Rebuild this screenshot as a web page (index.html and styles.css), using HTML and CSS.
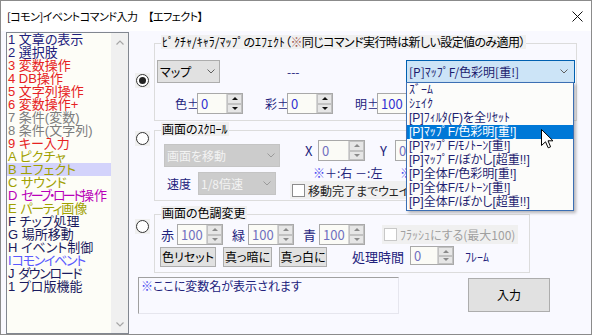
FILE: index.html
```html
<!DOCTYPE html>
<html lang="ja">
<head>
  <meta charset="UTF-8">
  <title>[コモン]イベントコマンド入力 【エフェクト】</title>
  <link rel="stylesheet" href="styles.css">
</head>
<body>
  <div class="window">
    <div class="titlebar">
      <span class="title">[コモン]イベントコマンド入力　【エフェクト】</span>
      <svg class="close" viewBox="0 0 11 11"><path d="M0.5 0.5 L10.5 10.5 M10.5 0.5 L0.5 10.5"/></svg>
    </div>

    <div class="client">
      <div class="cmd-list">
        <ul class="cmd-items">
          <li class="c-navy">1 文章の表示</li>
          <li class="c-navy">2 選択肢</li>
          <li class="c-red">3 変数操作</li>
          <li class="c-red">4 DB操作</li>
          <li class="c-red">5 文字列操作</li>
          <li class="c-red">6 変数操作+</li>
          <li class="c-gray">7 条件(変数)</li>
          <li class="c-gray">8 条件(文字列)</li>
          <li class="c-red">9 キー入力</li>
          <li class="c-olive">A ピクチャ</li>
          <li class="c-olive sel">B エフェクト</li>
          <li class="c-olive">C サウンド</li>
          <li class="c-pink">D <span class="kana narrow">セーブ・ロード</span>操作</li>
          <li class="c-olive">E <span class="kana">パーティ</span>画像</li>
          <li class="c-dark">F チップ処理</li>
          <li class="c-dark">G 場所移動</li>
          <li class="c-dark">H イベント制御</li>
          <li class="c-blue">I<span class="kana">コモンイベント</span></li>
          <li class="c-dark">J <span class="kana">ダウンロード</span></li>
          <li class="c-dark">1 プロ版機能</li>
        </ul>
        <div class="vscroll">
          <svg viewBox="0 0 8 5"><path d="M0.5 4.5 L4 1 L7.5 4.5"/></svg>
          <svg viewBox="0 0 8 5"><path d="M0.5 0.5 L4 4 L7.5 0.5"/></svg>
        </div>
      </div>

      <div class="main">
        <!-- ピクチャ/キャラ/マップのエフェクト -->
        <div class="opt-row">
          <span class="radio-cell"><span class="radio-box r-pic"><span class="radio on"></span></span></span>
          <div class="group g-pic">
            <div class="group-title">ﾋﾟｸﾁｬ/ｷｬﾗ/ﾏｯﾌﾟのｴﾌｪｸﾄ<span class="tight">（<span class="kome-t">※</span>同じコマンド実行時は新しい設定値のみ適用）</span></div>
            <div class="pic-top">
              <div class="combo c-target">マップ<svg viewBox="0 0 8 5"><path d="M0.5 0.5 L4 4 L7.5 0.5"/></svg></div>
              <span class="lbl dash">---</span>
              <div class="combo open c-effect">[P]ﾏｯﾌﾟF/色彩明[重!]<svg viewBox="0 0 8 5"><path d="M0.5 0.5 L4 4 L7.5 0.5"/></svg>
                <ul class="drop">
                  <li>ｽﾞｰﾑ</li>
                  <li>ｼｪｲｸ</li>
                  <li>[P]ﾌｨﾙﾀ(F)を全ﾘｾｯﾄ</li>
                  <li class="sel">[P]ﾏｯﾌﾟF/色彩明[重!]</li>
                  <li>[P]ﾏｯﾌﾟF/ﾓﾉﾄｰﾝ[重!]</li>
                  <li>[P]ﾏｯﾌﾟF/ぼかし[超重!!]</li>
                  <li>[P]全体F/色彩明[重!]</li>
                  <li>[P]全体F/ﾓﾉﾄｰﾝ[重!]</li>
                  <li>[P]全体F/ぼかし[超重!!]</li>
                </ul>
              </div>
            </div>
            <div class="pic-adjust">
              <div class="field"><span class="lbl f-lbl">色±</span><span class="spin"><span class="spin-val">0</span><span class="spin-btns"><i class="up"></i><i class="dn"></i></span></span></div>
              <div class="field"><span class="lbl f-lbl">彩±</span><span class="spin"><span class="spin-val">0</span><span class="spin-btns"><i class="up"></i><i class="dn"></i></span></span></div>
              <div class="field"><span class="lbl f-lbl">明±</span><span class="spin"><span class="spin-val">100</span><span class="spin-btns"><i class="up"></i><i class="dn"></i></span></span></div>
            </div>
          </div>
        </div>

        <!-- 画面のスクロール -->
        <div class="opt-row row-scroll">
          <span class="radio-cell"><span class="radio-box r-scroll"><span class="radio"></span></span></span>
          <div class="group g-scroll">
            <div class="group-title">画面のｽｸﾛｰﾙ</div>
            <div class="scroll-body">
              <div class="scroll-left">
                <div class="combo off c-move">画面を移動<svg viewBox="0 0 8 5"><path d="M0.5 0.5 L4 4 L7.5 0.5"/></svg></div>
                <div class="speed-row">
                  <span class="lbl speed-lbl">速度</span>
                  <div class="combo off c-speed">1/8倍速<svg viewBox="0 0 8 5"><path d="M0.5 0.5 L4 4 L7.5 0.5"/></svg></div>
                </div>
              </div>
              <div class="scroll-right">
                <div class="xy-row">
                  <span class="lbl x-lbl">X</span>
                  <span class="spin off s-xy"><span class="spin-val">0</span><span class="spin-btns"><i class="up"></i><i class="dn"></i></span></span>
                  <span class="lbl y-lbl">Y</span>
                  <span class="spin off s-xy"><span class="spin-val">0</span><span class="spin-btns"><i class="up"></i><i class="dn"></i></span></span>
                </div>
                <div class="note-row">
                  <span class="lbl note-x"><span class="kome">※</span>＋:右 －:左</span>
                  <span class="lbl kome">※</span>
                </div>
                <label class="check c-wait"><span class="box"></span>移動完了までウェイト</label>
              </div>
            </div>
          </div>
        </div>

        <!-- 画面の色調変更 -->
        <div class="opt-row row-tone">
          <span class="radio-cell"><span class="radio-box r-tone"><span class="radio"></span></span></span>
          <div class="group g-tone">
            <div class="group-title">画面の色調変更</div>
            <div class="tone-row">
              <div class="field"><span class="lbl t-lbl">赤</span><span class="spin off"><span class="spin-val">100</span><span class="spin-btns"><i class="up"></i><i class="dn"></i></span></span></div>
              <div class="field"><span class="lbl t-lbl">緑</span><span class="spin off"><span class="spin-val">100</span><span class="spin-btns"><i class="up"></i><i class="dn"></i></span></span></div>
              <div class="field"><span class="lbl t-lbl">青</span><span class="spin off"><span class="spin-val">100</span><span class="spin-btns"><i class="up"></i><i class="dn"></i></span></span></div>
              <label class="check disabled c-flash"><span class="box"></span>ﾌﾗｯｼｭにする(最大100)</label>
            </div>
            <div class="tone-actions">
              <button class="btn b-reset">色リセット</button>
              <button class="btn b-dark">真っ暗に</button>
              <button class="btn b-white">真っ白に</button>
              <span class="lbl time-lbl">処理時間</span>
              <span class="spin off s-time"><span class="spin-val">0</span><span class="spin-btns"><i class="up"></i><i class="dn"></i></span></span>
              <span class="lbl frame-lbl">ﾌﾚｰﾑ</span>
            </div>
          </div>
        </div>

        <div class="bottom-row">
          <div class="var-box"><span class="kome">※</span>ここに変数名が表示されます</div>
          <button class="btn b-enter">入力</button>
        </div>
      </div>
    </div>

    <svg class="cursor" viewBox="0 0 13 20"><path d="M0.5 0.5 L0.5 16.5 L4.5 12.8 L7.2 18.8 L9.6 17.8 L7 11.8 L12 11.8 Z"/></svg>
  </div>
</body>
</html>
```

FILE: styles.css
```css
* {
  margin: 0;
  padding: 0;
  box-sizing: border-box;
}

body {
  font-family: "Noto Sans CJK JP", "Noto Sans", sans-serif;
  font-size: 12px;
  color: #000;
  background: #fff;
  font-feature-settings: "palt";
}

.window {
  position: relative;
  width: 592px;
  height: 335px;
  border: 1px solid #8b8b8b;
  background: #fff;
  display: flex;
  flex-direction: column;
}

/* title bar */
.titlebar {
  height: 30px;
  flex: none;
  display: flex;
  align-items: center;
  justify-content: space-between;
  padding: 0 8px 0 6px;
}

.title {
  font-size: 11px;
  letter-spacing: -0.5px;
  line-height: 16px;
  white-space: nowrap;
}

.close {
  width: 11px;
  height: 11px;
  fill: none;
  stroke: #111;
  stroke-width: 1;
}

.client {
  flex: 1;
  display: flex;
  padding: 1px 0 0 5px;
  background: #f9f9ff;
}

/* command list */
.cmd-list {
  width: 123px;
  height: 302px;
  display: flex;
  border: 1px solid #828790;
  background: #fdfdf7;
}

.cmd-items {
  flex: 1;
  list-style: none;
  font-family: "Liberation Sans", "Noto Sans CJK JP", sans-serif;
  font-size: 13px;
  line-height: 13px;
}

.cmd-items li {
  height: 13px;
  padding-left: 1px;
  white-space: nowrap;
}

.cmd-items .kana {
  letter-spacing: -1.3px;
}

.cmd-items .kana.narrow {
  letter-spacing: -2.6px;
}

.cmd-items li.sel {
  background: #d3d3fb;
}

.c-navy { color: #20207c; }
.c-red { color: #e62222; }
.c-gray { color: #7c7c7c; }
.c-olive { color: #a0a000; }
.c-pink { color: #b800b8; }
.c-dark { color: #1a1a5e; }
.c-blue { color: #5a5aff; }

.vscroll {
  width: 17px;
  background: #f0f0f0;
  display: flex;
  flex-direction: column;
  justify-content: space-between;
  align-items: center;
  padding: 7px 0 6px;
}

.vscroll svg {
  width: 8px;
  height: 5px;
  fill: none;
  stroke: #a6a6a6;
  stroke-width: 1.2;
}

/* right side */
.main {
  flex: 1;
  padding-left: 6px;
  display: flex;
  flex-direction: column;
}

.opt-row {
  display: flex;
  margin-top: 11px;
}

.row-scroll { margin-top: 9px; }
.row-tone { margin-top: 13px; }

.radio-cell {
  width: 19px;
  flex: none;
}

.radio-box {
  display: block;
  width: 15px;
  height: 15px;
  padding: 1px;
  background: #f0f0f0;
}

.r-pic { margin-top: 30px; }
.r-scroll { margin-top: 1px; }
.r-tone { margin-top: 5px; }

.radio {
  display: block;
  width: 13px;
  height: 13px;
  border: 1px solid #333;
  border-radius: 50%;
  background: #fff;
  padding: 2px;
}

.radio.on::after {
  content: '';
  display: block;
  width: 7px;
  height: 7px;
  border-radius: 50%;
  background: #222;
}

.group {
  border: 1px solid #dcdcdc;
}

.group-title {
  width: fit-content;
  margin: -9px 0 0 6px;
  padding: 0 1px;
  line-height: 14px;
  background: #f0f0f0;
  white-space: nowrap;
}

.group-title .tight {
  letter-spacing: -0.6px;
}

.kome-t { color: #a05a50; }
.kome { color: #4848f0; }

.lbl {
  color: #22227c;
  white-space: nowrap;
  line-height: 14px;
}

.lbl.kome { color: #4848f0; }

/* combo boxes */
.combo {
  display: flex;
  align-items: center;
  justify-content: space-between;
  height: 23px;
  padding: 0 4px 0 2px;
  border: 1px solid #adadad;
  background: #e1e1e1;
  line-height: 14px;
  white-space: nowrap;
}

.combo svg {
  width: 8px;
  height: 5px;
  flex: none;
  fill: none;
  stroke: #606060;
  stroke-width: 1;
}

.combo.off {
  background: #cccccc;
  border-color: #c4c4c4;
  color: #f3f3f3;
}

.combo.off svg { stroke: #9a9a9a; }

.combo.open {
  position: relative;
  background: #cce4f7;
  border-color: #0060b0;
  color: #1c1c6e;
  padding-right: 6px;
}

.drop {
  position: absolute;
  left: -1px;
  top: 21px;
  width: 168px;
  list-style: none;
  border: 1px solid #3c6fb4;
  background: #fcfcfa;
  padding-bottom: 1px;
  box-shadow: 2px 2px 3px rgba(0, 0, 0, 0.28);
  font-family: "Liberation Sans", "Noto Sans CJK JP", sans-serif;
  z-index: 2;
}

.drop li {
  height: 14px;
  line-height: 14px;
  padding-left: 2px;
  color: #1e1e70;
}

.drop li.sel {
  background: #0078d7;
  color: #fff;
}

/* spin boxes */
.spin {
  display: flex;
  width: 46px;
  height: 21px;
  border: 1px solid #a9a9a9;
  background: #fbfbf6;
}

.spin-val {
  flex: 1;
  padding-left: 3px;
  font-size: 13px;
  line-height: 19px;
  color: #3232d2;
}

.spin.off .spin-val { color: #7070c0; }

.spin-btns {
  width: 16px;
  display: flex;
  flex-direction: column;
  border-left: 1px solid #d4d4d4;
}

.spin-btns i {
  flex: 1;
  display: flex;
  align-items: center;
  justify-content: center;
  background: #e6e6e6;
  border: 1px solid #c2c2c2;
}

.spin-btns i::after {
  content: '';
  border-left: 3px solid transparent;
  border-right: 3px solid transparent;
}

.spin-btns .up::after { border-bottom: 3px solid #111; }
.spin-btns .dn::after { border-top: 3px solid #111; }
.spin.off .up::after { border-bottom-color: #8a8a8a; }
.spin.off .dn::after { border-top-color: #8a8a8a; }

/* picture effect group */
.g-pic {
  width: 423px;
  height: 78px;
}

.pic-top {
  display: flex;
  align-items: center;
  height: 23px;
  margin: 11px 0 0 2px;
}

.c-target { width: 63px; }

.dash {
  width: 186px;
  padding-left: 67px;
}

.c-effect { width: 169px; }

.pic-adjust {
  display: flex;
  align-items: center;
  gap: 22px;
  margin: 10px 0 0 20px;
}

.field {
  display: flex;
  align-items: center;
}

.f-lbl { width: 22px; }

/* scroll group */
.g-scroll {
  width: 376px;
  height: 71px;
}

.scroll-body {
  display: flex;
}

.scroll-left {
  width: 135px;
  flex: none;
  margin-top: 8px;
  padding-left: 9px;
}

.c-move { width: 116px; }

.speed-row {
  display: flex;
  align-items: center;
  margin-top: 5px;
}

.speed-lbl {
  width: 34px;
  padding-left: 3px;
}

.c-speed { width: 78px; }

.scroll-right {
  margin-top: 4px;
}

.xy-row {
  display: flex;
  align-items: center;
  height: 21px;
}

.x-lbl {
  width: 13px;
  margin-left: 15px;
  font-size: 13px;
}

.y-lbl {
  width: 15px;
  margin-left: 15px;
  font-size: 13px;
}

.s-xy { width: 47px; }

.note-row {
  display: flex;
  margin-top: 5px;
  padding-left: 23px;
}

.note-x { width: 87px; }

.check {
  display: flex;
  align-items: center;
  gap: 3px;
  height: 18px;
  padding-left: 2px;
  background: #f0f0f0;
  color: #222;
  white-space: nowrap;
}

.check .box {
  width: 13px;
  height: 13px;
  flex: none;
  border: 1px solid #8c8c8c;
  background: #fff;
}

.check.disabled {
  color: #a0a0a0;
}

.check.disabled .box {
  border-color: #c8c8c8;
}

.c-wait {
  width: 240px;
  margin-top: 1px;
}

/* tone group */
.g-tone {
  width: 376px;
  height: 59px;
}

.tone-row {
  display: flex;
  align-items: center;
  gap: 9px;
  height: 21px;
  margin-top: 4px;
  padding-left: 6px;
}

.t-lbl {
  width: 16px;
  font-size: 13px;
}

.c-flash {
  width: 136px;
  height: 19px;
  margin-left: 8px;
}

.tone-actions {
  display: flex;
  align-items: center;
  height: 21px;
  margin-top: 1px;
  padding-left: 5px;
  gap: 7px;
}

.btn {
  height: 20px;
  border: 1px solid #adadad;
  background: #e1e1e1;
  font: inherit;
  line-height: 18px;
  color: #000;
  white-space: nowrap;
}

.b-reset { width: 56px; }
.b-dark { width: 49px; }
.b-white { width: 48px; }

.time-lbl {
  width: 58px;
  margin-left: 18px;
  font-size: 13px;
}

.s-time {
  width: 44px;
  height: 19px;
  margin-left: -7px;
  margin-top: -2px;
}

.s-time .spin-val { line-height: 17px; }

.frame-lbl {
  margin-left: 4px;
}

/* bottom */
.bottom-row {
  display: flex;
  align-items: flex-start;
  margin-top: 4px;
  padding-left: 3px;
}

.var-box {
  width: 261px;
  height: 37px;
  padding: 1px 2px;
  border: 1px solid #a0a0a0;
  border-right-color: #e6e6ee;
  border-bottom-color: #e6e6ee;
  background: #f9f9ff;
  color: #22227c;
  line-height: 14px;
}

.b-enter {
  width: 82px;
  height: 34px;
  margin: 1px 0 0 69px;
  font-size: 12px;
}

.cursor {
  position: absolute;
  left: 540px;
  top: 128px;
  width: 13px;
  height: 20px;
  fill: #fff;
  stroke: #000;
  stroke-width: 1;
  z-index: 3;
}
```
